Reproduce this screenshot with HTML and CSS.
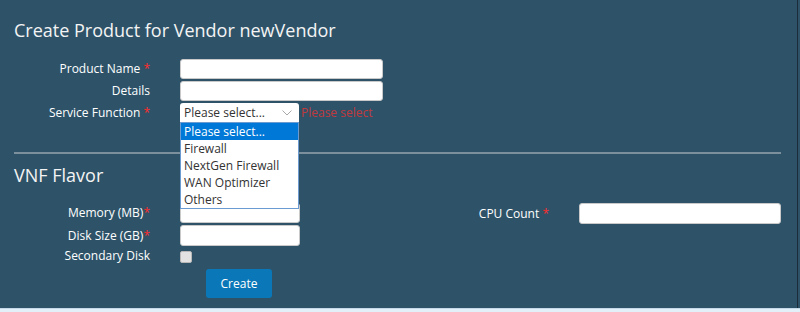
FILE: index.html
```html
<!DOCTYPE html>
<html lang="en">
<head>
    <meta charset="UTF-8">
    <title>Create Product</title>
    <link rel="stylesheet" href="styles.css">
</head>
<body>
    <div class="frame">
        <section class="panel">
            <h2 class="title">Create Product for Vendor newVendor</h2>

            <div class="form">
                <div class="field">
                    <label>Product Name <span class="req">*</span></label>
                    <input type="text" class="input wide">
                </div>
                <div class="field">
                    <label>Details</label>
                    <input type="text" class="input wide">
                </div>
                <div class="field">
                    <label>Service Function <span class="req">*</span></label>
                    <div class="select-wrap">
                        <div class="select">
                            <span>Please select...</span>
                            <svg class="chevron" width="10" height="6" viewBox="0 0 10 6"><path d="M0.5 0.5 L5 5 L9.5 0.5" fill="none" stroke="#a8a8a8" stroke-width="1"/></svg>
                        </div>
                        <span class="error">Please select</span>
                        <ul class="dropdown">
                            <li class="selected">Please select...</li>
                            <li>Firewall</li>
                            <li>NextGen Firewall</li>
                            <li>WAN Optimizer</li>
                            <li>Others</li>
                        </ul>
                    </div>
                </div>
            </div>

            <hr class="divider">

            <h2 class="title sub">VNF Flavor</h2>

            <div class="flavor">
                <div class="col">
                    <div class="field">
                        <label>Memory (MB)<span class="req">*</span></label>
                        <input type="text" class="input narrow">
                    </div>
                    <div class="field disk">
                        <label>Disk Size (GB)<span class="req">*</span></label>
                        <input type="text" class="input narrow">
                    </div>
                    <div class="field">
                        <label>Secondary Disk</label>
                        <span class="checkbox"></span>
                    </div>
                    <div class="actions">
                        <button class="button">Create</button>
                    </div>
                </div>
                <div class="col">
                    <div class="field">
                        <label>CPU Count <span class="req">*</span></label>
                        <input type="text" class="input cpu">
                    </div>
                </div>
            </div>
        </section>
        <div class="edge"></div>
    </div>
</body>
</html>
```

FILE: styles.css
```css
* {
    margin: 0;
    padding: 0;
    box-sizing: border-box;
}

body {
    font-family: 'Open Sans', sans-serif;
    background: #e2f0fa;
    overflow: hidden;
}

.frame {
    display: flex;
    height: 309px;
    border-bottom: 1px solid #c5d9e6;
}

.panel {
    width: 797px;
    background: #2e5369;
    color: #fff;
    padding-top: 18px;
}

.edge {
    width: 3px;
    background: #2e5369;
    border-left: 1px solid #1c2c38;
}

.title {
    font-size: 18px;
    font-weight: 400;
    line-height: 25px;
    padding-left: 14px;
    color: #f4f4f4;
}

.form {
    margin-top: 16px;
    display: flex;
    flex-direction: column;
    gap: 2px;
}

.field {
    display: grid;
    grid-template-columns: 150px auto;
    column-gap: 30px;
    align-items: center;
    min-height: 20px;
}

.field label {
    text-align: right;
    font-size: 12px;
    line-height: 20px;
    white-space: nowrap;
}

.req {
    color: #ff2b2b;
}

.input {
    height: 20px;
    border: 1px solid #c9c9c9;
    border-radius: 3px;
    background: #fff;
    outline: none;
}

.wide { width: 203px; }
.narrow { width: 120px; }
.cpu { width: 202px; height: 21px; }

.select-wrap {
    position: relative;
    display: flex;
    align-items: flex-start;
    height: 20px;
}

.select {
    width: 119px;
    height: 19px;
    background: #fff;
    border-radius: 3px 3px 0 0;
    display: flex;
    align-items: center;
    justify-content: space-between;
    padding: 0 7px 0 4px;
    font-size: 12px;
    color: #333;
}

.error {
    margin-left: 2px;
    font-size: 12px;
    line-height: 20px;
    color: #c0393d;
}

.dropdown {
    position: absolute;
    top: 19px;
    left: 0;
    width: 119px;
    list-style: none;
    background: #fff;
    border: 1px solid #6b9bd0;
    z-index: 5;
}

.dropdown li {
    height: 17px;
    line-height: 17px;
    padding-left: 3px;
    font-size: 12px;
    color: #333;
}

.dropdown li.selected {
    background: #0078d7;
    color: #fff;
}

.divider {
    border: none;
    height: 2px;
    background: #7b8f9c;
    margin: 29px 16px 9px 14px;
}

.flavor {
    margin-top: 15px;
    display: grid;
    grid-template-columns: 399px 398px;
}

.col {
    display: flex;
    flex-direction: column;
}

.col .disk {
    margin-top: 2px;
    min-height: 21px;
}

.col .disk .input {
    height: 21px;
}

.checkbox {
    width: 12px;
    height: 12px;
    margin-top: 1px;
    background: #e2e2e2;
    border: 1px solid #b8b8b8;
    border-radius: 2px;
}

.actions {
    padding-left: 206px;
    margin-top: 3px;
}

.button {
    width: 66px;
    height: 29px;
    background: #0a78b8;
    color: #fff;
    border: none;
    border-radius: 3px;
    font-family: 'Open Sans', sans-serif;
    font-size: 12px;
}
```
